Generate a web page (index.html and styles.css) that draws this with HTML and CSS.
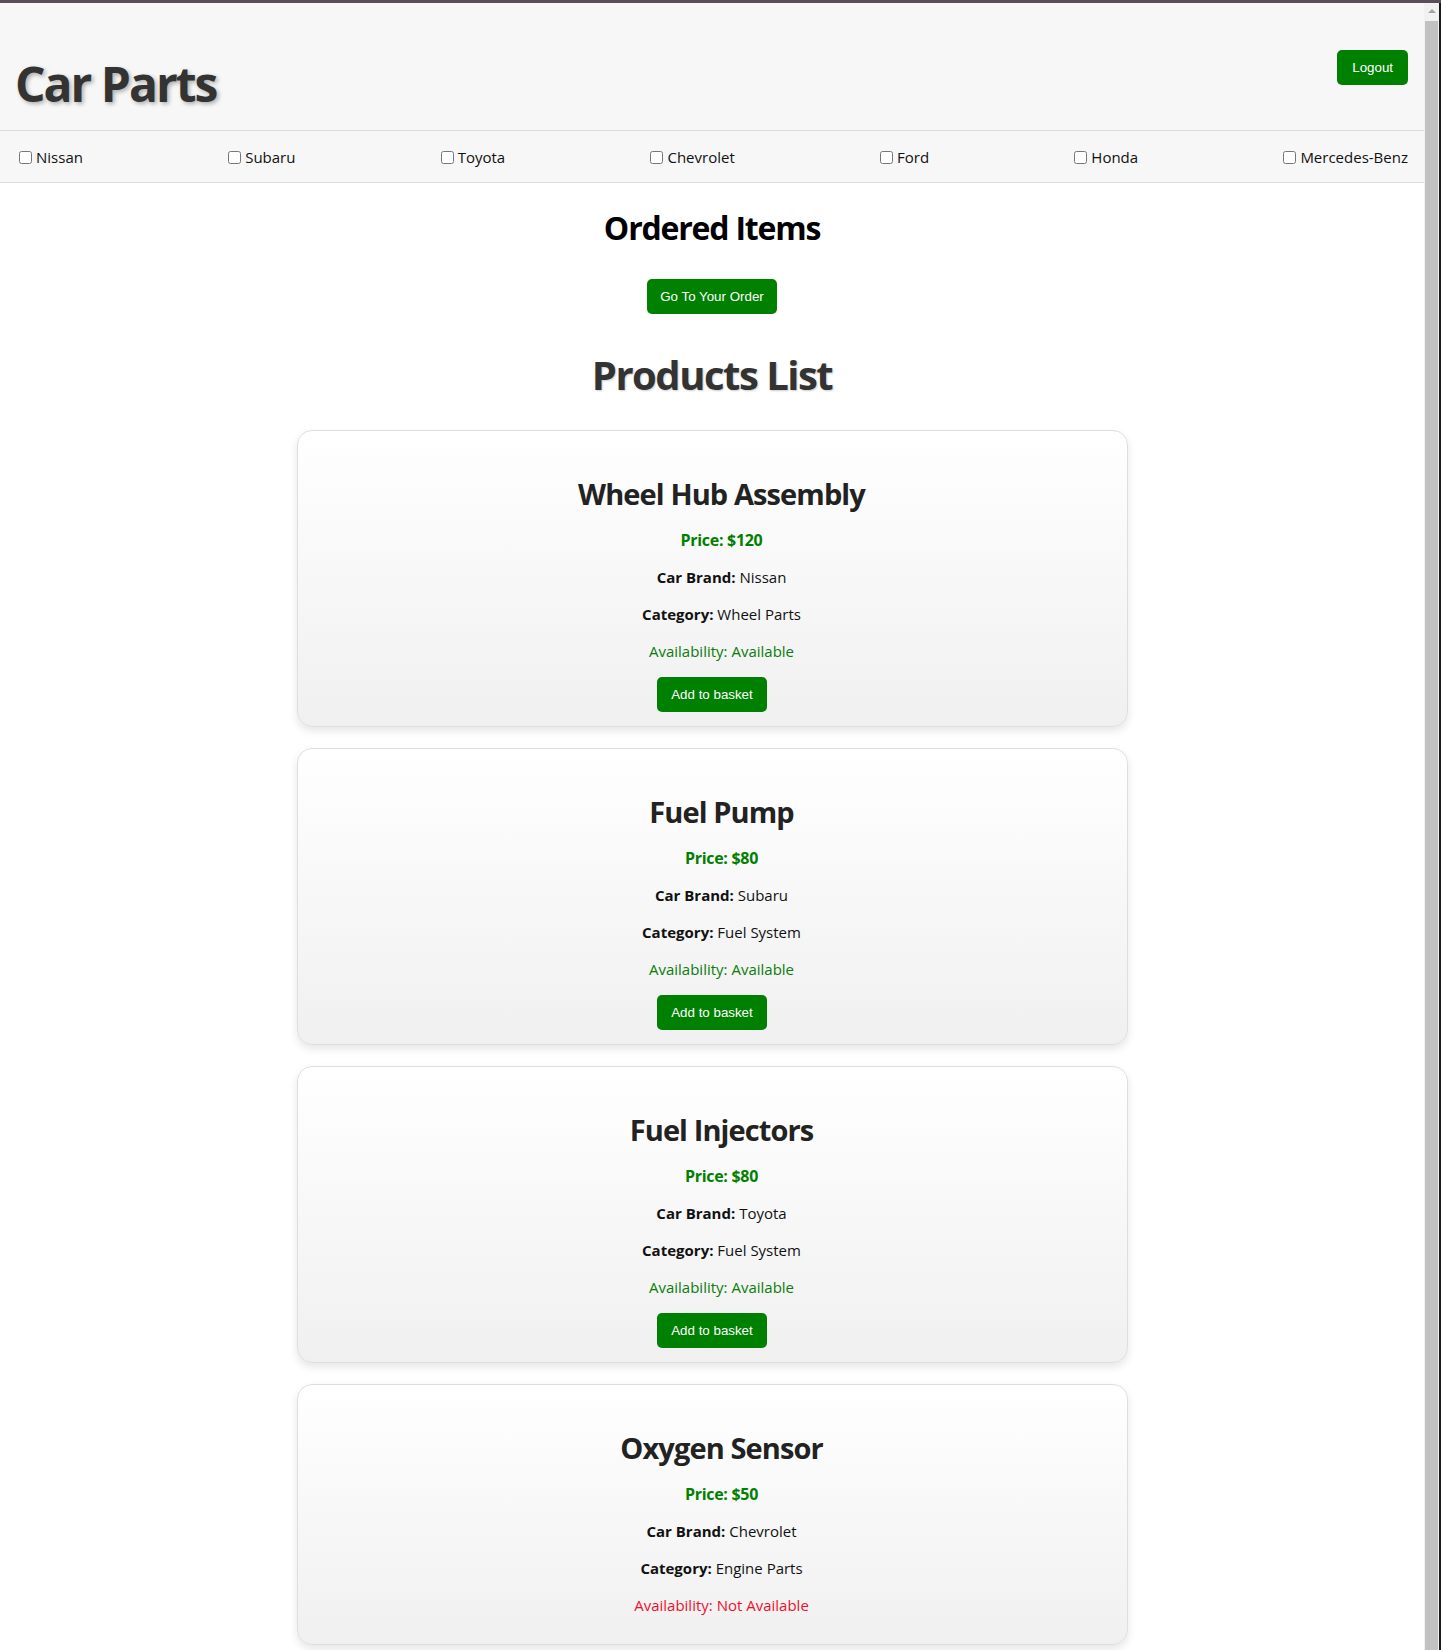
FILE: index.html
```html
<!DOCTYPE html>
<html lang="en">
<head>
<meta charset="utf-8">
<title>Car Parts</title>
<link rel="stylesheet" href="styles.css">
</head>
<body>
<div class="topbar"></div>
<div class="frame">
  <div class="page">
    <header class="site-header">
      <h1 class="brand">Car Parts</h1>
      <button class="btn btn-logout">Logout</button>
    </header>
    <nav class="brand-filter">
      <label class="filter-item"><input type="checkbox">Nissan</label>
      <label class="filter-item"><input type="checkbox">Subaru</label>
      <label class="filter-item"><input type="checkbox">Toyota</label>
      <label class="filter-item"><input type="checkbox">Chevrolet</label>
      <label class="filter-item"><input type="checkbox">Ford</label>
      <label class="filter-item"><input type="checkbox">Honda</label>
      <label class="filter-item"><input type="checkbox">Mercedes-Benz</label>
    </nav>
    <main class="content">
      <section class="ordered">
        <h2 class="section-title">Ordered Items</h2>
        <button class="btn btn-order">Go To Your Order</button>
      </section>
      <h1 class="products-title">Products List</h1>
      <div class="product-list">
        <div class="product-card">
          <div class="product-info">
            <h2 class="product-name">Wheel Hub Assembly</h2>
            <p class="product-line price">Price: $120</p>
            <p class="product-line"><strong>Car Brand:</strong> Nissan</p>
            <p class="product-line"><strong>Category:</strong> Wheel Parts</p>
            <p class="product-line avail-yes">Availability: Available</p>
          </div>
          <button class="btn btn-add">Add to basket</button>
        </div>
        <div class="product-card">
          <div class="product-info">
            <h2 class="product-name">Fuel Pump</h2>
            <p class="product-line price">Price: $80</p>
            <p class="product-line"><strong>Car Brand:</strong> Subaru</p>
            <p class="product-line"><strong>Category:</strong> Fuel System</p>
            <p class="product-line avail-yes">Availability: Available</p>
          </div>
          <button class="btn btn-add">Add to basket</button>
        </div>
        <div class="product-card">
          <div class="product-info">
            <h2 class="product-name">Fuel Injectors</h2>
            <p class="product-line price">Price: $80</p>
            <p class="product-line"><strong>Car Brand:</strong> Toyota</p>
            <p class="product-line"><strong>Category:</strong> Fuel System</p>
            <p class="product-line avail-yes">Availability: Available</p>
          </div>
          <button class="btn btn-add">Add to basket</button>
        </div>
        <div class="product-card">
          <div class="product-info">
            <h2 class="product-name">Oxygen Sensor</h2>
            <p class="product-line price">Price: $50</p>
            <p class="product-line"><strong>Car Brand:</strong> Chevrolet</p>
            <p class="product-line"><strong>Category:</strong> Engine Parts</p>
            <p class="product-line avail-no">Availability: Not Available</p>
          </div>
        </div>
      </div>
    </main>
  </div>
  <div class="scrollbar" aria-hidden="true">
    <span class="scroll-arrow"></span>
    <span class="scroll-thumb"></span>
  </div>
</div>
</body>
</html>
```
FILE: styles.css
```css
* {
  box-sizing: border-box;
}

html,
body {
  overflow-x: hidden;
}

body {
  margin: 0;
  font-family: "Open Sans", "Noto Sans", sans-serif;
  color: #000;
  background: #fff;
}

.topbar {
  height: 3px;
  background: #5b4d5b;
}

.frame {
  display: flex;
  align-items: flex-start;
}

.page {
  flex: 1;
  min-width: 0;
}

.scrollbar {
  flex: 0 0 17px;
  height: 1647px;
  display: flex;
  flex-direction: column;
  align-items: center;
  background: #f1f1f1;
  border-right: 2px solid #1a1a1a;
}

.scroll-arrow {
  margin-top: 6px;
  width: 0;
  height: 0;
  border-left: 4px solid transparent;
  border-right: 4px solid transparent;
  border-bottom: 4px solid #a3a3a3;
}

.scroll-thumb {
  margin-top: 8px;
  width: 13px;
  flex: 1;
  background: #c1c1c1;
}

.site-header {
  display: flex;
  justify-content: space-between;
  align-items: flex-start;
  height: 128px;
  padding: 0 16px 0 15px;
  background: #f7f7f7;
  border-bottom: 1px solid #dcdcdc;
}

.brand {
  margin: 49px 0 0;
  font-size: 48px;
  line-height: 64px;
  font-weight: 700;
  letter-spacing: -2px;
  color: #333;
  text-shadow: 2px 2px 4px rgba(0, 0, 0, 0.3);
}

.btn {
  font-family: "Liberation Sans", Arial, sans-serif;
  font-size: 13.333px;
  line-height: 15px;
  color: #fff;
  background: #008000;
  border: none;
  border-radius: 5px;
  padding: 10px 15px;
  cursor: pointer;
}

.btn-logout {
  margin-top: 47px;
}

.brand-filter {
  display: flex;
  justify-content: space-between;
  align-items: center;
  height: 52px;
  padding: 16px 16px 14px 15px;
  background: #f7f7f7;
  border-bottom: 1px solid #dcdcdc;
}

.filter-item {
  display: inline-flex;
  align-items: center;
  font-size: 15px;
  line-height: 21px;
  color: #111;
}

.filter-item input {
  margin: 0 4px;
  width: 13px;
  height: 13px;
}

.content {
  text-align: center;
}

.ordered {
  display: flex;
  flex-direction: column;
  align-items: center;
}

.section-title {
  margin: 24px 0 0;
  font-size: 32px;
  line-height: 42px;
  font-weight: 700;
  letter-spacing: -1.2px;
  color: #000;
}

.btn-order {
  margin-top: 30px;
  padding: 10px 13px;
}

.products-title {
  margin: 34px 0 29px;
  font-size: 40px;
  line-height: 53px;
  font-weight: 700;
  letter-spacing: -1.5px;
  color: #333;
  text-shadow: 1px 1px 2px rgba(0, 0, 0, 0.2);
}

.product-list {
  display: flex;
  flex-direction: column;
  align-items: center;
  gap: 21px;
  padding-bottom: 21px;
}

.product-card {
  width: 831px;
  display: flex;
  flex-direction: column;
  align-items: center;
  padding: 15px 15px 14px;
  border: 1px solid #dedede;
  border-radius: 15px;
  background: linear-gradient(#ffffff, #f0f0f0);
  box-shadow: 0 4px 8px rgba(0, 0, 0, 0.1);
}

.product-info {
  align-self: stretch;
  padding-left: 19px;
  text-align: center;
}

.product-name {
  margin: 27px 0 15px;
  font-size: 29px;
  line-height: 42px;
  font-weight: 700;
  letter-spacing: -0.9px;
  color: #222;
}

.product-line {
  margin: 0 0 16px;
  font-size: 15px;
  line-height: 21px;
  color: #111;
}

.product-line:last-child {
  margin-bottom: 14px;
}

.price {
  color: #008000;
  font-weight: 700;
  font-size: 16px;
  letter-spacing: -0.3px;
}

.avail-yes {
  color: #0a7d0a;
}

.avail-no {
  color: #f0102a;
}

.btn-add {
  margin-top: 1px;
  padding: 10px 14px;
}
```
